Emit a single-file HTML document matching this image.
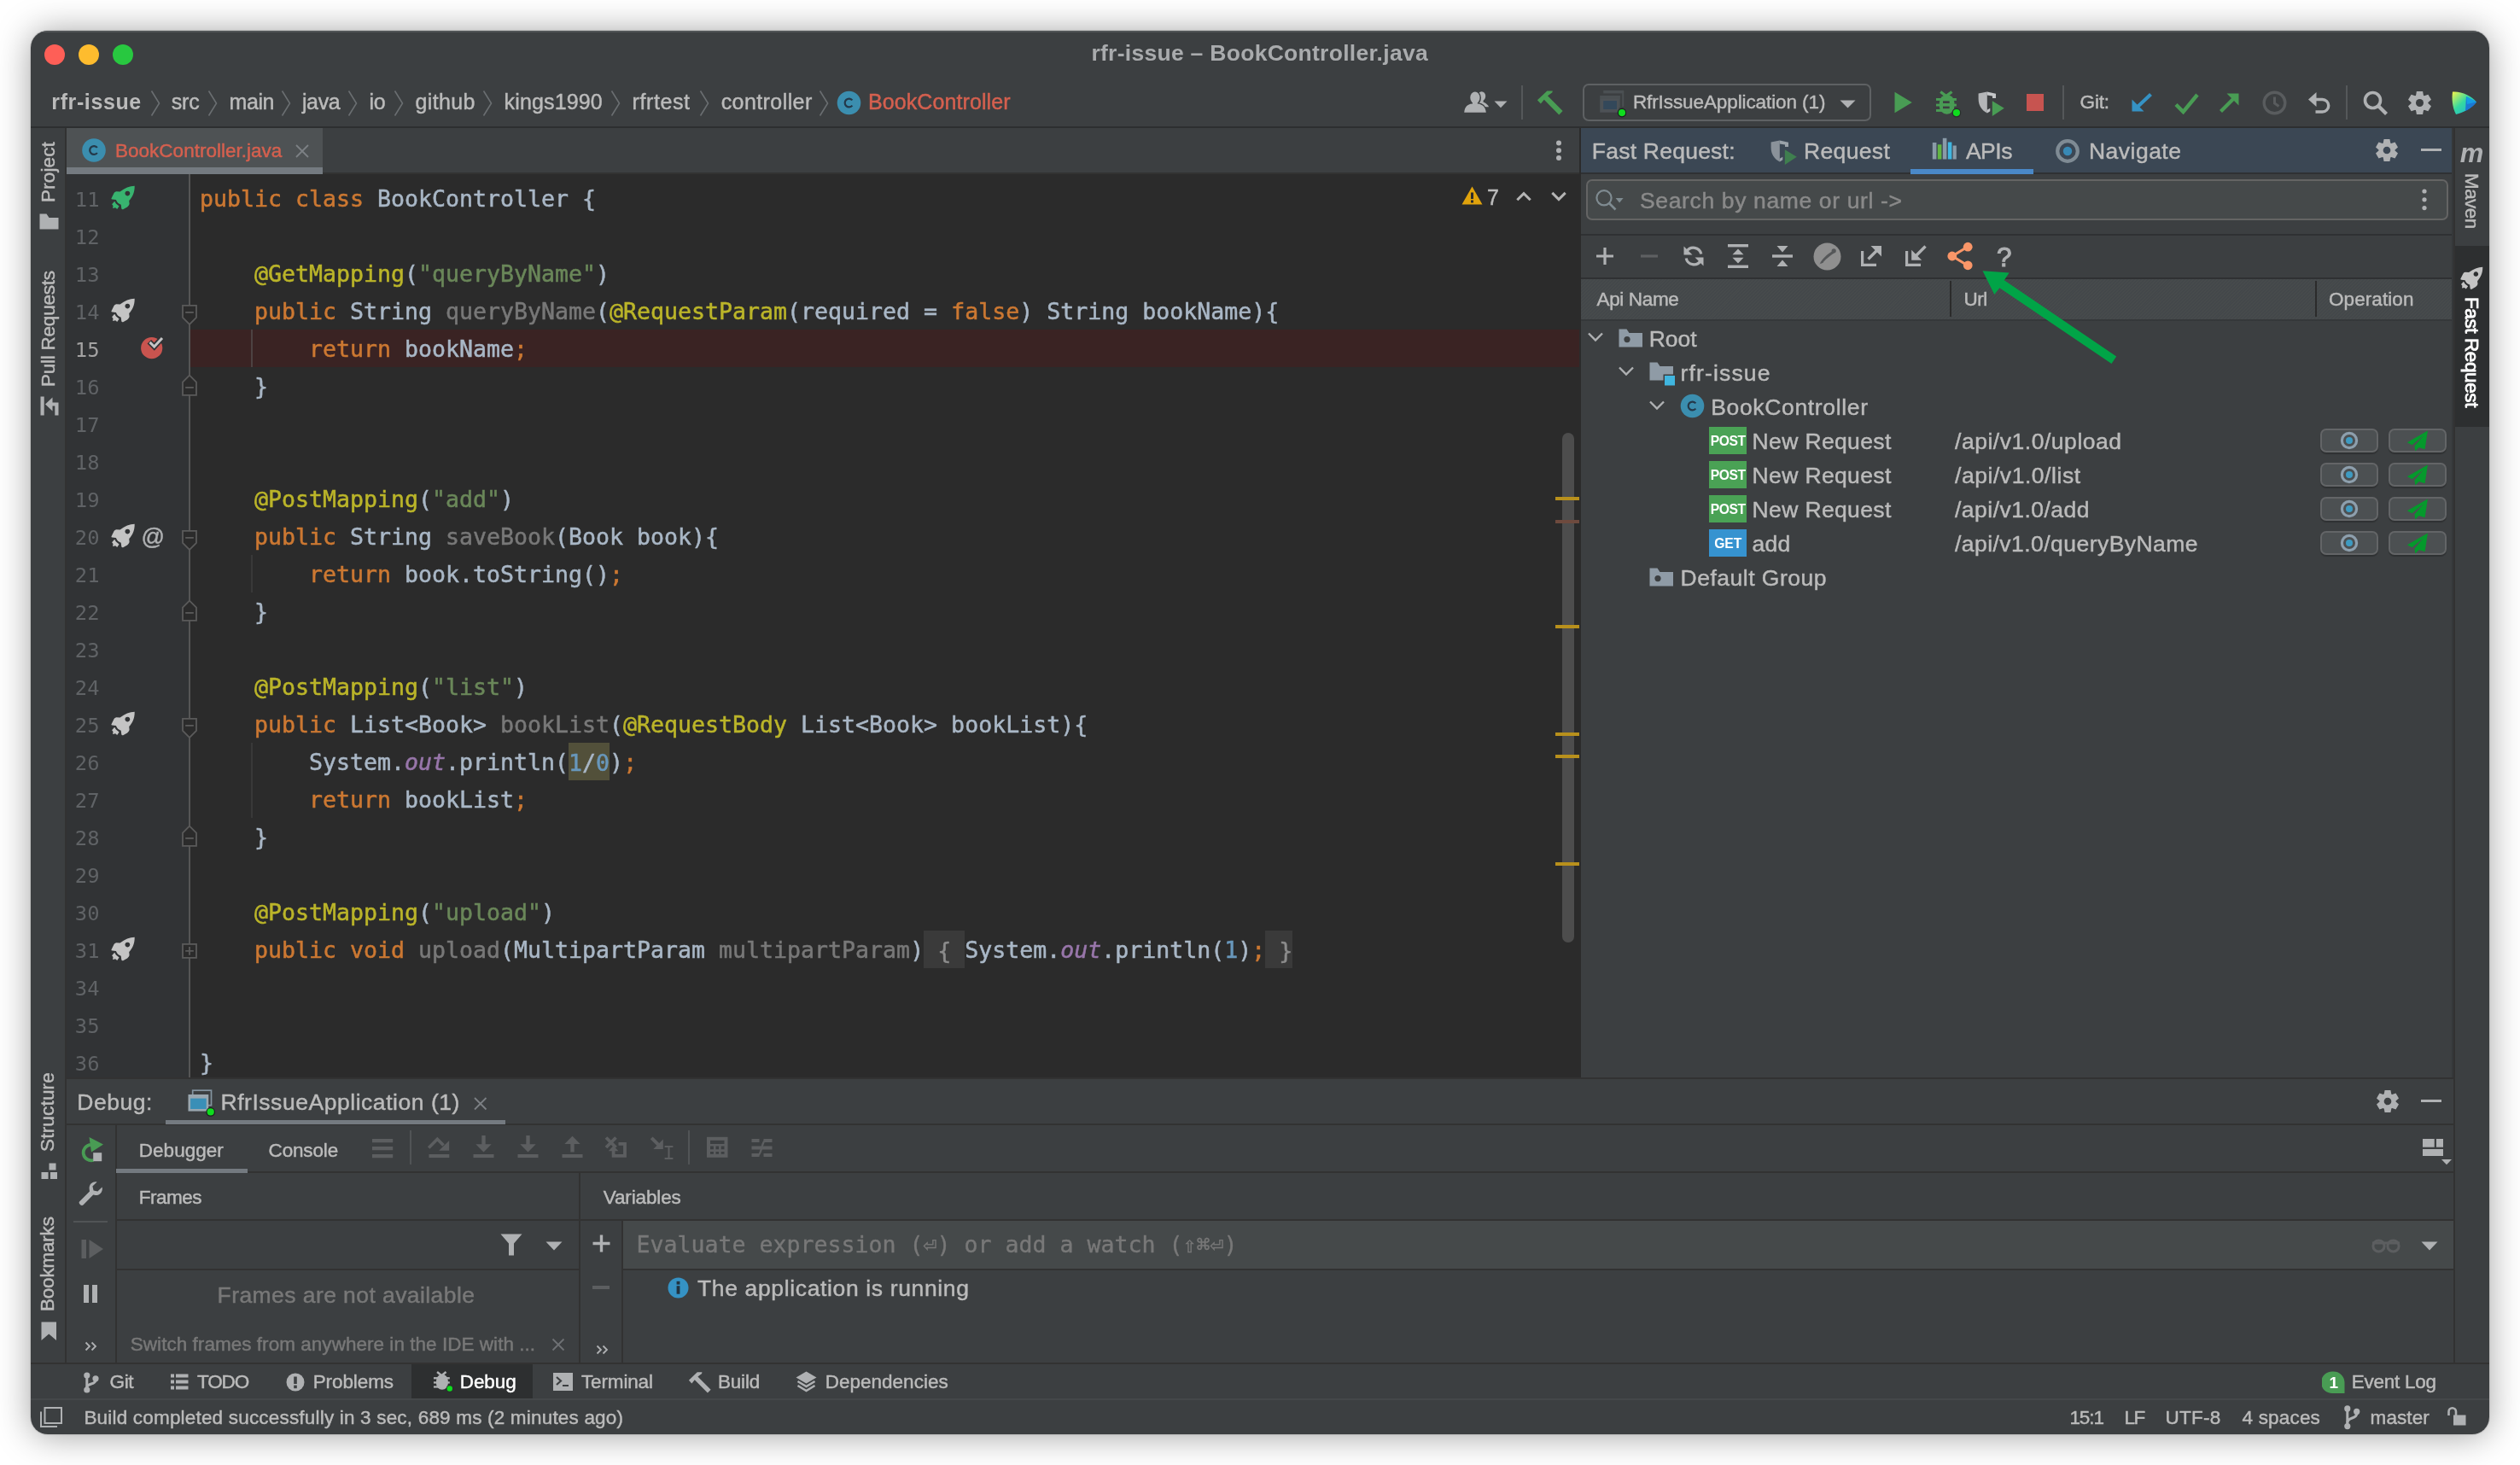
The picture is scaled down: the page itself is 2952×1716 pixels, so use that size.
<!DOCTYPE html>
<html><head><meta charset="utf-8"><title>rfr-issue – BookController.java</title>
<style>
html,body{margin:0;padding:0;background:#fff;}
body{width:2952px;height:1716px;position:relative;overflow:hidden;font-family:"Liberation Sans",sans-serif;}
#win{position:absolute;left:36px;top:36px;width:2880px;height:1644px;border-radius:20px;background:#3c3f41;overflow:hidden;}
#shadow{position:absolute;left:36px;top:36px;width:2880px;height:1644px;border-radius:20px;box-shadow:0 1.5px 40px rgba(0,0,0,0.37),0 0 1.5px rgba(0,0,0,0.45);}
#win div,#win span,#win svg{position:absolute;white-space:pre;}
#win span{display:block;}
</style></head><body>
<div id="shadow"></div>
<div id="win">
<div style="left:-36px;top:-36px;width:2952px;height:1716px;will-change:transform;">
<div style="left:36px;top:36px;width:2880px;height:1.6px;background:#515456;"></div>
<div style="left:36px;top:148px;width:2880px;height:2px;background:#2d2f30;"></div>
<div style="left:76px;top:150px;width:2px;height:1447px;background:#323232;"></div>
<div style="left:78px;top:150px;width:1772px;height:54px;background:#3c3f41;"></div>
<div style="left:78px;top:150px;width:300px;height:54px;background:#4e5254;"></div>
<div style="left:78px;top:196px;width:300px;height:8px;background:#747a80;"></div>
<div style="left:378px;top:202px;width:1472px;height:2px;background:#323232;"></div>
<div style="left:78px;top:204px;width:1772px;height:1058px;background:#2b2b2b;"></div>
<div style="left:78px;top:204px;width:144px;height:1058px;background:#313335;"></div>
<div style="left:221px;top:204px;width:2px;height:1058px;background:#555555;"></div>
<div style="left:223px;top:386px;width:1627px;height:44px;background:#3a2323;"></div>
<div style="left:1850px;top:150px;width:2px;height:1112px;background:#2b2b2b;"></div>
<div style="left:1852px;top:150px;width:1020px;height:52px;background:#3b4754;"></div>
<div style="left:1852px;top:202px;width:1020px;height:2px;background:#2f3133;"></div>
<div style="left:1852px;top:274px;width:1020px;height:2px;background:#2f3133;"></div>
<div style="left:1852px;top:325px;width:1020px;height:2px;background:#2f3133;"></div>
<div style="left:1852px;top:327px;width:1020px;height:47px;background:#45494a;background:repeating-linear-gradient(135deg,#474b4c 0 1.4px,#43474a 1.4px 2.8px);"></div>
<div style="left:1852px;top:374px;width:1020px;height:2px;background:#35383a;"></div>
<div style="left:1858px;top:210px;width:1010px;height:48px;box-sizing:border-box;background:#45494a;border:2px solid #646464;border-radius:7px;"></div>
<div style="left:2874px;top:150px;width:2px;height:1447px;background:#323232;"></div>
<div style="left:2872px;top:150px;width:2px;height:1112px;background:#35383a;"></div>
<div style="left:2876px;top:288px;width:40px;height:212px;background:#2d2f30;"></div>
<div style="left:78px;top:1262px;width:2796px;height:2px;background:#323232;"></div>
<div style="left:78px;top:1316px;width:2796px;height:2px;background:#323232;"></div>
<div style="left:136px;top:1372px;width:2738px;height:2px;background:#323232;"></div>
<div style="left:136px;top:1428px;width:2738px;height:2px;background:#323232;"></div>
<div style="left:135px;top:1318px;width:2px;height:278px;background:#323232;"></div>
<div style="left:678px;top:1374px;width:2px;height:222px;background:#323232;"></div>
<div style="left:728px;top:1430px;width:2px;height:166px;background:#323232;"></div>
<div style="left:136px;top:1486px;width:542px;height:2px;background:#323232;"></div>
<div style="left:730px;top:1430px;width:2144px;height:56px;background:#45494a;"></div>
<div style="left:730px;top:1486px;width:2144px;height:2px;background:#323232;"></div>
<div style="left:36px;top:1596px;width:2880px;height:2px;background:#323232;"></div>
<div style="left:482px;top:1598px;width:142px;height:40px;background:#2d2f30;"></div>
<div style="left:36px;top:1638px;width:2880px;height:2px;background:#444749;"></div>
<style>
.cl{font-family:"DejaVu Sans Mono","Liberation Mono",monospace;font-size:26.58px;line-height:44px;height:44px;color:#a9b7c6;-webkit-text-stroke:0.5px;}
.cl i{font-style:normal;}
.cl .k{color:#cc7832}.cl .a{color:#bbb529}.cl .s{color:#6a8759}.cl .n{color:#6897bb}.cl .u{color:#787878}
.cl .o{color:#9876aa;font-style:italic}.cl .f{color:#8c8c8c;background:#3a3a3a;padding:7.5px 0 5.5px 0}.cl .w{background:#52503a;padding:7.5px 0 5.5px 0}
.ln{font-family:"DejaVu Sans Mono","Liberation Mono",monospace;font-size:23.8px;line-height:44px;height:44px;color:#606366;width:60px;text-align:right;}
</style>
<span class="ln" style="left:56.5px;top:212px;color:#606366">11</span>
<span class="cl" style="left:234.0px;top:211px;"><i class=k>public class </i>BookController {</span>
<span class="ln" style="left:56.5px;top:256px;color:#606366">12</span>
<span class="ln" style="left:56.5px;top:300px;color:#606366">13</span>
<span class="cl" style="left:234.0px;top:299px;">    <i class=a>@GetMapping</i>(<i class=s>"queryByName"</i>)</span>
<span class="ln" style="left:56.5px;top:344px;color:#606366">14</span>
<span class="cl" style="left:234.0px;top:343px;">    <i class=k>public </i>String <i class=u>queryByName</i>(<i class=a>@RequestParam</i>(required = <i class=k>false</i>) String bookName){</span>
<span class="ln" style="left:56.5px;top:388px;color:#a4a3a3">15</span>
<span class="cl" style="left:234.0px;top:387px;">        <i class=k>return </i>bookName<i class=k>;</i></span>
<span class="ln" style="left:56.5px;top:432px;color:#606366">16</span>
<span class="cl" style="left:234.0px;top:431px;">    }</span>
<span class="ln" style="left:56.5px;top:476px;color:#606366">17</span>
<span class="ln" style="left:56.5px;top:520px;color:#606366">18</span>
<span class="ln" style="left:56.5px;top:564px;color:#606366">19</span>
<span class="cl" style="left:234.0px;top:563px;">    <i class=a>@PostMapping</i>(<i class=s>"add"</i>)</span>
<span class="ln" style="left:56.5px;top:608px;color:#606366">20</span>
<span class="cl" style="left:234.0px;top:607px;">    <i class=k>public </i>String <i class=u>saveBook</i>(Book book){</span>
<span class="ln" style="left:56.5px;top:652px;color:#606366">21</span>
<span class="cl" style="left:234.0px;top:651px;">        <i class=k>return </i>book.toString()<i class=k>;</i></span>
<span class="ln" style="left:56.5px;top:696px;color:#606366">22</span>
<span class="cl" style="left:234.0px;top:695px;">    }</span>
<span class="ln" style="left:56.5px;top:740px;color:#606366">23</span>
<span class="ln" style="left:56.5px;top:784px;color:#606366">24</span>
<span class="cl" style="left:234.0px;top:783px;">    <i class=a>@PostMapping</i>(<i class=s>"list"</i>)</span>
<span class="ln" style="left:56.5px;top:828px;color:#606366">25</span>
<span class="cl" style="left:234.0px;top:827px;">    <i class=k>public </i>List&lt;Book&gt; <i class=u>bookList</i>(<i class=a>@RequestBody </i>List&lt;Book&gt; bookList){</span>
<span class="ln" style="left:56.5px;top:872px;color:#606366">26</span>
<span class="cl" style="left:234.0px;top:871px;">        System.<i class=o>out</i>.println(<i class=w><i class=n>1</i>/<i class=n>0</i></i>)<i class=k>;</i></span>
<span class="ln" style="left:56.5px;top:916px;color:#606366">27</span>
<span class="cl" style="left:234.0px;top:915px;">        <i class=k>return </i>bookList<i class=k>;</i></span>
<span class="ln" style="left:56.5px;top:960px;color:#606366">28</span>
<span class="cl" style="left:234.0px;top:959px;">    }</span>
<span class="ln" style="left:56.5px;top:1004px;color:#606366">29</span>
<span class="ln" style="left:56.5px;top:1048px;color:#606366">30</span>
<span class="cl" style="left:234.0px;top:1047px;">    <i class=a>@PostMapping</i>(<i class=s>"upload"</i>)</span>
<span class="ln" style="left:56.5px;top:1092px;color:#606366">31</span>
<span class="cl" style="left:234.0px;top:1091px;">    <i class=k>public void </i><i class=u>upload</i>(MultipartParam <i class=u>multipartParam</i>)<i class=f> { </i>System.<i class=o>out</i>.println(<i class=n>1</i>)<i class=k>;</i><i class=f> }</i></span>
<span class="ln" style="left:56.5px;top:1136px;color:#606366">34</span>
<span class="ln" style="left:56.5px;top:1180px;color:#606366">35</span>
<span class="ln" style="left:56.5px;top:1224px;color:#606366">36</span>
<span class="cl" style="left:234.0px;top:1223px;">}</span>
<div style="left:294px;top:386px;width:2px;height:44px;background:#4d4242;"></div>
<div style="left:294px;top:650px;width:2px;height:44px;background:#393939;"></div>
<div style="left:294px;top:870px;width:2px;height:44px;background:#393939;"></div>
<div style="left:294px;top:914px;width:2px;height:44px;background:#393939;"></div>
<svg style="left:129.5px;top:217px;" width="29.0" height="29.0" viewBox="0 0 29 29"><path fill="#38b36f" fill-rule="evenodd" d="M27.7,0.7 C22,0.8 16,3.2 10.6,7.5 L6.2,7.2 Q4.3,7.6 3.6,9 L0.4,15.4 Q0.3,16.5 1.5,16.5 L5.9,17.1 C7,20 9,22 11.7,22.7 L12.3,27.3 Q12.6,28.6 14.2,28.2 C18,26.5 21,24.5 21.6,22 L21.2,18.1 C24.5,14.5 27.9,9 27.7,0.7 Z M19.35,6.66 a2.9,2.9 0 1 0 0.01,0 Z"/>
<path fill="#38b36f" d="M4.2,18.8 L5.9,21.5 L9.6,24.6 L7.2,28 L5.2,26.3 L2.1,27 L2.5,23.9 L1.1,22.2 Z"/></svg>
<svg style="left:129.5px;top:349px;" width="29.0" height="29.0" viewBox="0 0 29 29"><path fill="#c4c4c4" fill-rule="evenodd" d="M27.7,0.7 C22,0.8 16,3.2 10.6,7.5 L6.2,7.2 Q4.3,7.6 3.6,9 L0.4,15.4 Q0.3,16.5 1.5,16.5 L5.9,17.1 C7,20 9,22 11.7,22.7 L12.3,27.3 Q12.6,28.6 14.2,28.2 C18,26.5 21,24.5 21.6,22 L21.2,18.1 C24.5,14.5 27.9,9 27.7,0.7 Z M19.35,6.66 a2.9,2.9 0 1 0 0.01,0 Z"/>
<path fill="#c4c4c4" d="M4.2,18.8 L5.9,21.5 L9.6,24.6 L7.2,28 L5.2,26.3 L2.1,27 L2.5,23.9 L1.1,22.2 Z"/></svg>
<svg style="left:129.5px;top:613px;" width="29.0" height="29.0" viewBox="0 0 29 29"><path fill="#c4c4c4" fill-rule="evenodd" d="M27.7,0.7 C22,0.8 16,3.2 10.6,7.5 L6.2,7.2 Q4.3,7.6 3.6,9 L0.4,15.4 Q0.3,16.5 1.5,16.5 L5.9,17.1 C7,20 9,22 11.7,22.7 L12.3,27.3 Q12.6,28.6 14.2,28.2 C18,26.5 21,24.5 21.6,22 L21.2,18.1 C24.5,14.5 27.9,9 27.7,0.7 Z M19.35,6.66 a2.9,2.9 0 1 0 0.01,0 Z"/>
<path fill="#c4c4c4" d="M4.2,18.8 L5.9,21.5 L9.6,24.6 L7.2,28 L5.2,26.3 L2.1,27 L2.5,23.9 L1.1,22.2 Z"/></svg>
<svg style="left:129.5px;top:833px;" width="29.0" height="29.0" viewBox="0 0 29 29"><path fill="#c4c4c4" fill-rule="evenodd" d="M27.7,0.7 C22,0.8 16,3.2 10.6,7.5 L6.2,7.2 Q4.3,7.6 3.6,9 L0.4,15.4 Q0.3,16.5 1.5,16.5 L5.9,17.1 C7,20 9,22 11.7,22.7 L12.3,27.3 Q12.6,28.6 14.2,28.2 C18,26.5 21,24.5 21.6,22 L21.2,18.1 C24.5,14.5 27.9,9 27.7,0.7 Z M19.35,6.66 a2.9,2.9 0 1 0 0.01,0 Z"/>
<path fill="#c4c4c4" d="M4.2,18.8 L5.9,21.5 L9.6,24.6 L7.2,28 L5.2,26.3 L2.1,27 L2.5,23.9 L1.1,22.2 Z"/></svg>
<svg style="left:129.5px;top:1097px;" width="29.0" height="29.0" viewBox="0 0 29 29"><path fill="#c4c4c4" fill-rule="evenodd" d="M27.7,0.7 C22,0.8 16,3.2 10.6,7.5 L6.2,7.2 Q4.3,7.6 3.6,9 L0.4,15.4 Q0.3,16.5 1.5,16.5 L5.9,17.1 C7,20 9,22 11.7,22.7 L12.3,27.3 Q12.6,28.6 14.2,28.2 C18,26.5 21,24.5 21.6,22 L21.2,18.1 C24.5,14.5 27.9,9 27.7,0.7 Z M19.35,6.66 a2.9,2.9 0 1 0 0.01,0 Z"/>
<path fill="#c4c4c4" d="M4.2,18.8 L5.9,21.5 L9.6,24.6 L7.2,28 L5.2,26.3 L2.1,27 L2.5,23.9 L1.1,22.2 Z"/></svg>
<svg style="left:162px;top:385.5px;" width="34" height="40" viewBox="0 0 34 40"><circle cx="15.7" cy="21.7" r="12.6" fill="#c9544f"/>
<path d="M12.8,14.2 L18.7,20 L28.6,9.3" fill="none" stroke="#313335" stroke-width="6.5"/>
<path d="M13.5,14.9 L18.7,20 L28,10" fill="none" stroke="#c4c5c6" stroke-width="3"/></svg>
<span style="left:165.5px;top:612.1px;font-size:27px;line-height:35px;color:#afb1b3;font-family:'Liberation Sans',sans-serif;-webkit-text-stroke:0.45px;">@</span>
<svg style="left:211px;top:355px;" width="22" height="30" viewBox="0 0 22 30"><path d="M3,2.9 L19,2.9 L19,16.8 L11,25 L3,16.8 Z" fill="#2b2b2b" stroke="#5a5a5a" stroke-width="1.8"/><path d="M6.2,10.9 H15.8" stroke="#5a5a5a" stroke-width="1.8"/></svg>
<svg style="left:211px;top:619px;" width="22" height="30" viewBox="0 0 22 30"><path d="M3,2.9 L19,2.9 L19,16.8 L11,25 L3,16.8 Z" fill="#2b2b2b" stroke="#5a5a5a" stroke-width="1.8"/><path d="M6.2,10.9 H15.8" stroke="#5a5a5a" stroke-width="1.8"/></svg>
<svg style="left:211px;top:839px;" width="22" height="30" viewBox="0 0 22 30"><path d="M3,2.9 L19,2.9 L19,16.8 L11,25 L3,16.8 Z" fill="#2b2b2b" stroke="#5a5a5a" stroke-width="1.8"/><path d="M6.2,10.9 H15.8" stroke="#5a5a5a" stroke-width="1.8"/></svg>
<svg style="left:211px;top:437px;" width="22" height="30" viewBox="0 0 22 30"><path d="M11,2.6 L19,10.7 L19,25.8 L3,25.8 L3,10.7 Z" fill="#2b2b2b" stroke="#5a5a5a" stroke-width="1.8"/><path d="M6.2,16.9 H15.8" stroke="#5a5a5a" stroke-width="1.8"/></svg>
<svg style="left:211px;top:701px;" width="22" height="30" viewBox="0 0 22 30"><path d="M11,2.6 L19,10.7 L19,25.8 L3,25.8 L3,10.7 Z" fill="#2b2b2b" stroke="#5a5a5a" stroke-width="1.8"/><path d="M6.2,16.9 H15.8" stroke="#5a5a5a" stroke-width="1.8"/></svg>
<svg style="left:211px;top:965px;" width="22" height="30" viewBox="0 0 22 30"><path d="M11,2.6 L19,10.7 L19,25.8 L3,25.8 L3,10.7 Z" fill="#2b2b2b" stroke="#5a5a5a" stroke-width="1.8"/><path d="M6.2,16.9 H15.8" stroke="#5a5a5a" stroke-width="1.8"/></svg>
<svg style="left:211px;top:1103px;" width="22" height="22" viewBox="0 0 22 22"><rect x="3" y="2.9" width="16" height="16" fill="#2b2b2b" stroke="#5a5a5a" stroke-width="1.8"/><path d="M6.2,10.9 H15.8 M11,6.1 V15.7" stroke="#5a5a5a" stroke-width="1.8"/></svg>
<svg style="left:95px;top:161px;" width="30" height="30" viewBox="0 0 30 30"><circle cx="15" cy="15" r="13.8" fill="#3b8eaf"/><path d="M18.9,11.9 A4.9,4.9 0 1 0 18.9,18.1" fill="none" stroke="#24394a" stroke-width="2.2"/></svg>
<span style="left:135.0px;top:161.7px;font-size:22.5px;line-height:29px;color:#d5604f;font-family:'Liberation Sans',sans-serif;-webkit-text-stroke:0.45px;letter-spacing:0.015px;">BookController.java</span>
<svg style="left:345px;top:168px;" width="18" height="18" viewBox="0 0 18 18"><path d="M2,2 L16,16 M16,2 L2,16" stroke="#7c8084" stroke-width="1.8"/></svg>
<svg style="left:1820px;top:160px;" width="12" height="34" viewBox="0 0 12 34"><circle cx="6" cy="7.4" r="3" fill="#afb1b3"/><circle cx="6" cy="16.2" r="3" fill="#afb1b3"/><circle cx="6" cy="25" r="3" fill="#afb1b3"/></svg>
<svg style="left:1711px;top:217px;" width="27" height="24" viewBox="0 0 27 24"><path d="M13.5,1.5 L25.5,22.5 L1.5,22.5 Z" fill="#e0a30c"/><rect x="12" y="8.5" width="3" height="7.5" fill="#2b2b2b"/><rect x="12" y="17.5" width="3" height="3" fill="#2b2b2b"/></svg>
<span style="left:1742.0px;top:215.3px;font-size:25px;line-height:32px;color:#bbbbbb;font-family:'Liberation Sans',sans-serif;-webkit-text-stroke:0.45px;">7</span>
<svg style="left:1774px;top:222px;" width="22" height="16" viewBox="0 0 22 16"><path d="M3.3,12.3 L11,4.6 L18.7,12.3" fill="none" stroke="#b4b4b4" stroke-width="3"/></svg>
<svg style="left:1815px;top:222px;" width="22" height="16" viewBox="0 0 22 16"><path d="M3.3,3.9 L11,11.6 L18.7,3.9" fill="none" stroke="#b4b4b4" stroke-width="3"/></svg>
<div style="left:1830px;top:507px;width:14px;height:597px;background:rgba(255,255,255,0.16);border-radius:7px;"></div>
<div style="left:1822px;top:582px;width:28px;height:4px;background:#b8901c;"></div>
<div style="left:1822px;top:732px;width:28px;height:4px;background:#b8901c;"></div>
<div style="left:1822px;top:858px;width:28px;height:4px;background:#b8901c;"></div>
<div style="left:1822px;top:884px;width:28px;height:4px;background:#b8901c;"></div>
<div style="left:1822px;top:1010px;width:28px;height:4px;background:#b8901c;"></div>
<div style="left:1822px;top:609px;width:28px;height:4px;background:#6e4a3e;"></div>
<span style="left:1864.8px;top:159.8px;font-size:26.5px;line-height:34px;color:#bbbbbb;font-family:'Liberation Sans',sans-serif;-webkit-text-stroke:0.45px;letter-spacing:0.233px;">Fast Request:</span>
<svg style="left:2073.5px;top:164px;" width="32" height="30" viewBox="0 0 32 30"><path d="M0.6,2.6 L10.8,0.6 L10.8,25.4 C4,22 0.6,16 0.6,9 Z" fill="#8a929a"/>
<path d="M10.8,0.6 L21,2.8 L21,7.9 L17,7.9 L17,5.6 L10.8,4.6 Z M10.8,25.4 L10.8,21.8 L14.3,19.8 L14.3,23.2 Z" fill="#9aa2a9"/>
<path d="M16.8,11.2 L30.8,19.7 L16.8,29 Z" fill="#3f7f4f"/></svg>
<span style="left:2113.0px;top:159.8px;font-size:26.5px;line-height:34px;color:#bbbbbb;font-family:'Liberation Sans',sans-serif;-webkit-text-stroke:0.45px;letter-spacing:0.357px;">Request</span>
<svg style="left:2263px;top:161px;" width="30" height="26" viewBox="0 0 30 26"><rect x="0.8" y="6" width="4.6" height="19.5" fill="#8a9ba8"/><rect x="6.8" y="8.3" width="4.6" height="17.2" fill="#62b543"/>
<rect x="12.8" y="0.8" width="4.6" height="24.7" fill="#8a9ba8"/><rect x="18.8" y="5.5" width="4.6" height="20" fill="#40b6e0"/><rect x="24.6" y="9.5" width="4.2" height="16" fill="#8a9ba8"/></svg>
<span style="left:2302.9px;top:159.8px;font-size:26.5px;line-height:34px;color:#bbbbbb;font-family:'Liberation Sans',sans-serif;-webkit-text-stroke:0.45px;letter-spacing:-0.441px;">APIs</span>
<div style="left:2238px;top:198px;width:144px;height:6px;background:#4a88c7;"></div>
<svg style="left:2407px;top:161.5px;" width="30" height="30" viewBox="0 0 30 30"><circle cx="15" cy="15" r="11.8" fill="none" stroke="#7f8b94" stroke-width="4.2"/><circle cx="15" cy="15" r="5.2" fill="#3889b5"/></svg>
<span style="left:2447.0px;top:159.8px;font-size:26.5px;line-height:34px;color:#bbbbbb;font-family:'Liberation Sans',sans-serif;-webkit-text-stroke:0.45px;letter-spacing:0.476px;">Navigate</span>
<svg style="left:2783px;top:163px;" width="26" height="26" viewBox="0 0 24 24"><g transform="translate(12,12)" fill="#afb1b3"><path d="M-3.2,-12 L3.2,-12 L4.2,-6.5 L-4.2,-6.5 Z" transform="rotate(0)"/><path d="M-3.2,-12 L3.2,-12 L4.2,-6.5 L-4.2,-6.5 Z" transform="rotate(60)"/><path d="M-3.2,-12 L3.2,-12 L4.2,-6.5 L-4.2,-6.5 Z" transform="rotate(120)"/><path d="M-3.2,-12 L3.2,-12 L4.2,-6.5 L-4.2,-6.5 Z" transform="rotate(180)"/><path d="M-3.2,-12 L3.2,-12 L4.2,-6.5 L-4.2,-6.5 Z" transform="rotate(240)"/><path d="M-3.2,-12 L3.2,-12 L4.2,-6.5 L-4.2,-6.5 Z" transform="rotate(300)"/><circle r="8.7"/><circle r="4" fill="#3b4754"/></g></svg>
<div style="left:2836px;top:174px;width:24px;height:3.4px;background:#afb1b3;"></div>
<svg style="left:1868px;top:221px;" width="36" height="26" viewBox="0 0 36 26"><circle cx="11" cy="10.8" r="8.6" fill="none" stroke="#7f8b91" stroke-width="2.2"/><path d="M17,17 L24.5,24.5" stroke="#7f8b91" stroke-width="2.6"/><path d="M24.6,11 L33.6,11 L29.1,16.4 Z" fill="#7f8b91"/></svg>
<span style="left:1921.0px;top:217.8px;font-size:26.5px;line-height:34px;color:#8a8a8a;font-family:'Liberation Sans',sans-serif;-webkit-text-stroke:0.45px;letter-spacing:0.635px;">Search by name or url -&gt;</span>
<svg style="left:2834px;top:218px;" width="12" height="32" viewBox="0 0 12 32"><circle cx="6" cy="6" r="2.6" fill="#afb1b3"/><circle cx="6" cy="15.8" r="2.6" fill="#afb1b3"/><circle cx="6" cy="25.6" r="2.6" fill="#afb1b3"/></svg>
<svg style="left:1868px;top:288px;" width="24" height="24" viewBox="0 0 24 24"><path d="M12,2 V22 M2,12 H22" stroke="#afb1b3" stroke-width="3.2"/></svg>
<svg style="left:1920px;top:288px;" width="24" height="24" viewBox="0 0 24 24"><path d="M2,12 H22" stroke="#5e6062" stroke-width="3.2"/></svg>
<svg style="left:1970px;top:286px;" width="28" height="28" viewBox="0 0 28 28"><g transform="translate(28,0) scale(-1,1)"><path d="M5.2,11.5 A9.3,9.3 0 0 1 22.2,8.6" fill="none" stroke="#afb1b3" stroke-width="3.2"/><path d="M25.5,2.5 L25.5,12.5 L15.5,12.5 Z" fill="#afb1b3"/>
<path d="M22.8,16.5 A9.3,9.3 0 0 1 5.8,19.4" fill="none" stroke="#afb1b3" stroke-width="3.2"/><path d="M2.5,25.5 L2.5,15.5 L12.5,15.5 Z" fill="#afb1b3"/></g></svg>
<svg style="left:2023px;top:285px;" width="26" height="30" viewBox="0 0 26 30"><rect x="1" y="1" width="24" height="3.4" fill="#afb1b3"/><rect x="1" y="25.6" width="24" height="3.4" fill="#afb1b3"/><path d="M13,6.5 L19.5,13.3 L6.5,13.3 Z M13,23.5 L19.5,16.7 L6.5,16.7 Z" fill="#afb1b3"/></svg>
<svg style="left:2075px;top:285px;" width="26" height="30" viewBox="0 0 26 30"><rect x="1" y="13.3" width="24" height="3.4" fill="#afb1b3"/><path d="M13,10.5 L19.5,3 L6.5,3 Z M13,19.5 L19.5,27 L6.5,27 Z" fill="#afb1b3"/></svg>
<svg style="left:2123.5px;top:283.5px;" width="33" height="33" viewBox="0 0 33 33"><circle cx="16.5" cy="16.5" r="16" fill="#8f8f8f"/><path d="M8,24.5 C10,20 16,14 22,10.5 L24.5,12.5 C19,16 14,20.5 11.5,23.5 Z" fill="#555759"/><circle cx="24.2" cy="9.8" r="2.6" fill="#555759"/><path d="M7,25.5 L11,22.5 L11.8,23.8 Z" fill="#555759"/></svg>
<svg style="left:2179px;top:286px;" width="27" height="27" viewBox="0 0 27 27"><path d="M2.6,8 V24.4 H19" fill="none" stroke="#afb1b3" stroke-width="3.2"/><path d="M9.5,17.5 L20,7" stroke="#afb1b3" stroke-width="3.4"/><path d="M12.5,2 L25,2 L25,14.5 Z" fill="#afb1b3"/></svg>
<svg style="left:2231px;top:286px;" width="27" height="27" viewBox="0 0 27 27"><path d="M2.6,8 V24.4 H19" fill="none" stroke="#afb1b3" stroke-width="3.2"/><path d="M24.5,2.5 L13,14" stroke="#afb1b3" stroke-width="3.4"/><path d="M8.2,6.8 L8.2,18.8 L20.2,18.8 Z" fill="#afb1b3"/></svg>
<svg style="left:2281px;top:283px;" width="32" height="34" viewBox="0 0 32 34"><path d="M24,6 L6,17 L24,28" fill="none" stroke="#fa9668" stroke-width="3"/><circle cx="24.2" cy="6.2" r="5.4" fill="#fa9668"/><circle cx="5.8" cy="17" r="5.4" fill="#fa9668"/><circle cx="24.2" cy="27.8" r="5.4" fill="#fa9668"/></svg>
<span style="left:2339.0px;top:280.6px;font-size:31.5px;line-height:41px;color:#afb1b3;font-family:'Liberation Sans',sans-serif;-webkit-text-stroke:0.45px;-webkit-text-stroke:1.1px;">?</span>
<span style="left:1870.5px;top:335.8px;font-size:22.5px;line-height:29px;color:#bbbbbb;font-family:'Liberation Sans',sans-serif;-webkit-text-stroke:0.45px;letter-spacing:-0.349px;">Api Name</span>
<div style="left:2284px;top:329px;width:2px;height:42px;background:#2b2b2b;"></div>
<span style="left:2300.5px;top:335.8px;font-size:22.5px;line-height:29px;color:#bbbbbb;font-family:'Liberation Sans',sans-serif;-webkit-text-stroke:0.45px;letter-spacing:-0.447px;">Url</span>
<div style="left:2712px;top:329px;width:2px;height:42px;background:#2b2b2b;"></div>
<span style="left:2728.0px;top:335.8px;font-size:22.5px;line-height:29px;color:#bbbbbb;font-family:'Liberation Sans',sans-serif;-webkit-text-stroke:0.45px;letter-spacing:0.076px;">Operation</span>
<svg style="left:1859px;top:388px;" width="20" height="14" viewBox="0 0 20 14"><path d="M2,2.5 L10,10.5 L18,2.5" fill="none" stroke="#afb1b3" stroke-width="2.4"/></svg>
<svg style="left:1895.5px;top:384.5px;" width="29" height="22" viewBox="0 0 29 22"><path d="M0.5,0.5 L9.5,0.5 L12.5,5 L28,5 L28,21.5 L0.5,21.5 Z" fill="#8f9ba6"/><circle cx="10" cy="12.6" r="3.6" fill="#3c3f41"/></svg>
<span style="left:1931.7px;top:380.1px;font-size:26.5px;line-height:34px;color:#bbbbbb;font-family:'Liberation Sans',sans-serif;-webkit-text-stroke:0.45px;letter-spacing:0.006px;">Root</span>
<svg style="left:1894.5px;top:428px;" width="20" height="14" viewBox="0 0 20 14"><path d="M2,2.5 L10,10.5 L18,2.5" fill="none" stroke="#afb1b3" stroke-width="2.4"/></svg>
<svg style="left:1931.5px;top:424px;" width="32" height="29" viewBox="0 0 32 29"><path d="M0.5,0.5 L9.5,0.5 L12.5,5 L28,5 L28,21.5 L0.5,21.5 Z" fill="#8f9ba6"/><rect x="16.5" y="14.5" width="14" height="13" fill="#3c3f41"/><rect x="18" y="16" width="12" height="11.5" fill="#40b6e0"/></svg>
<span style="left:1968.6px;top:420.1px;font-size:26.5px;line-height:34px;color:#bbbbbb;font-family:'Liberation Sans',sans-serif;-webkit-text-stroke:0.45px;letter-spacing:1.144px;">rfr-issue</span>
<svg style="left:1931px;top:467.8px;" width="20" height="14" viewBox="0 0 20 14"><path d="M2,2.5 L10,10.5 L18,2.5" fill="none" stroke="#afb1b3" stroke-width="2.4"/></svg>
<svg style="left:1967.5px;top:461.3px;" width="29" height="29" viewBox="0 0 29 29"><circle cx="14.5" cy="14.5" r="13.8" fill="#3b8eaf"/><path d="M18.4,11.4 A4.9,4.9 0 1 0 18.4,17.6" fill="none" stroke="#24394a" stroke-width="2.2"/></svg>
<span style="left:2004.2px;top:460.0px;font-size:26.5px;line-height:34px;color:#bbbbbb;font-family:'Liberation Sans',sans-serif;-webkit-text-stroke:0.45px;letter-spacing:0.659px;">BookController</span>
<div style="left:2002px;top:500px;width:44px;height:32px;background:#4aa255;"></div>
<span style="left:2003.7px;top:506.5px;font-size:15.7px;line-height:20px;color:#ffffff;font-family:'Liberation Sans',sans-serif;font-weight:700;letter-spacing:-0.436px;">POST</span>
<span style="left:2052.6px;top:499.8px;font-size:26.5px;line-height:34px;color:#bbbbbb;font-family:'Liberation Sans',sans-serif;-webkit-text-stroke:0.45px;letter-spacing:0.357px;">New Request</span>
<span style="left:2290.0px;top:499.8px;font-size:26.5px;line-height:34px;color:#bbbbbb;font-family:'Liberation Sans',sans-serif;-webkit-text-stroke:0.45px;letter-spacing:0.530px;">/api/v1.0/upload</span>
<div style="left:2718px;top:502px;width:67.5px;height:27.5px;box-sizing:border-box;background:#4c5052;border:2px solid #636567;border-radius:7px;box-shadow:0 2px 1px rgba(0,0,0,0.22);"></div>
<svg style="left:2741px;top:504.75px;" width="22" height="22" viewBox="0 0 22 22"><circle cx="11" cy="11" r="8.6" fill="none" stroke="#8d9fad" stroke-width="3.2"/><circle cx="11" cy="11" r="4" fill="#3e9bc2"/></svg>
<div style="left:2798px;top:502px;width:67.5px;height:27.5px;box-sizing:border-box;background:#4c5052;border:2px solid #636567;border-radius:7px;box-shadow:0 2px 1px rgba(0,0,0,0.22);"></div>
<svg style="left:2819px;top:503.5px;" width="26" height="25" viewBox="0 0 26 25"><path d="M24.9,0.5 L0.8,14.3 L6.5,17.2 L19.9,6.2 L9.4,18.4 L10.3,24.5 L14.6,20.1 L21.6,22.3 Z" fill="#05992c"/></svg>
<div style="left:2002px;top:540px;width:44px;height:32px;background:#4aa255;"></div>
<span style="left:2003.7px;top:546.5px;font-size:15.7px;line-height:20px;color:#ffffff;font-family:'Liberation Sans',sans-serif;font-weight:700;letter-spacing:-0.436px;">POST</span>
<span style="left:2052.6px;top:539.8px;font-size:26.5px;line-height:34px;color:#bbbbbb;font-family:'Liberation Sans',sans-serif;-webkit-text-stroke:0.45px;letter-spacing:0.357px;">New Request</span>
<span style="left:2290.0px;top:539.8px;font-size:26.5px;line-height:34px;color:#bbbbbb;font-family:'Liberation Sans',sans-serif;-webkit-text-stroke:0.45px;letter-spacing:0.548px;">/api/v1.0/list</span>
<div style="left:2718px;top:542px;width:67.5px;height:27.5px;box-sizing:border-box;background:#4c5052;border:2px solid #636567;border-radius:7px;box-shadow:0 2px 1px rgba(0,0,0,0.22);"></div>
<svg style="left:2741px;top:544.75px;" width="22" height="22" viewBox="0 0 22 22"><circle cx="11" cy="11" r="8.6" fill="none" stroke="#8d9fad" stroke-width="3.2"/><circle cx="11" cy="11" r="4" fill="#3e9bc2"/></svg>
<div style="left:2798px;top:542px;width:67.5px;height:27.5px;box-sizing:border-box;background:#4c5052;border:2px solid #636567;border-radius:7px;box-shadow:0 2px 1px rgba(0,0,0,0.22);"></div>
<svg style="left:2819px;top:543.5px;" width="26" height="25" viewBox="0 0 26 25"><path d="M24.9,0.5 L0.8,14.3 L6.5,17.2 L19.9,6.2 L9.4,18.4 L10.3,24.5 L14.6,20.1 L21.6,22.3 Z" fill="#05992c"/></svg>
<div style="left:2002px;top:580px;width:44px;height:32px;background:#4aa255;"></div>
<span style="left:2003.7px;top:586.5px;font-size:15.7px;line-height:20px;color:#ffffff;font-family:'Liberation Sans',sans-serif;font-weight:700;letter-spacing:-0.436px;">POST</span>
<span style="left:2052.6px;top:579.8px;font-size:26.5px;line-height:34px;color:#bbbbbb;font-family:'Liberation Sans',sans-serif;-webkit-text-stroke:0.45px;letter-spacing:0.357px;">New Request</span>
<span style="left:2290.0px;top:579.8px;font-size:26.5px;line-height:34px;color:#bbbbbb;font-family:'Liberation Sans',sans-serif;-webkit-text-stroke:0.45px;letter-spacing:0.480px;">/api/v1.0/add</span>
<div style="left:2718px;top:582px;width:67.5px;height:27.5px;box-sizing:border-box;background:#4c5052;border:2px solid #636567;border-radius:7px;box-shadow:0 2px 1px rgba(0,0,0,0.22);"></div>
<svg style="left:2741px;top:584.75px;" width="22" height="22" viewBox="0 0 22 22"><circle cx="11" cy="11" r="8.6" fill="none" stroke="#8d9fad" stroke-width="3.2"/><circle cx="11" cy="11" r="4" fill="#3e9bc2"/></svg>
<div style="left:2798px;top:582px;width:67.5px;height:27.5px;box-sizing:border-box;background:#4c5052;border:2px solid #636567;border-radius:7px;box-shadow:0 2px 1px rgba(0,0,0,0.22);"></div>
<svg style="left:2819px;top:583.5px;" width="26" height="25" viewBox="0 0 26 25"><path d="M24.9,0.5 L0.8,14.3 L6.5,17.2 L19.9,6.2 L9.4,18.4 L10.3,24.5 L14.6,20.1 L21.6,22.3 Z" fill="#05992c"/></svg>
<div style="left:2002px;top:620px;width:44px;height:32px;background:#3693d0;"></div>
<span style="left:2008.2px;top:626.5px;font-size:15.7px;line-height:20px;color:#ffffff;font-family:'Liberation Sans',sans-serif;font-weight:700;letter-spacing:-0.091px;">GET</span>
<span style="left:2052.6px;top:619.8px;font-size:26.5px;line-height:34px;color:#bbbbbb;font-family:'Liberation Sans',sans-serif;-webkit-text-stroke:0.45px;letter-spacing:0.262px;">add</span>
<span style="left:2290.0px;top:619.8px;font-size:26.5px;line-height:34px;color:#bbbbbb;font-family:'Liberation Sans',sans-serif;-webkit-text-stroke:0.45px;letter-spacing:0.455px;">/api/v1.0/queryByName</span>
<div style="left:2718px;top:622px;width:67.5px;height:27.5px;box-sizing:border-box;background:#4c5052;border:2px solid #636567;border-radius:7px;box-shadow:0 2px 1px rgba(0,0,0,0.22);"></div>
<svg style="left:2741px;top:624.75px;" width="22" height="22" viewBox="0 0 22 22"><circle cx="11" cy="11" r="8.6" fill="none" stroke="#8d9fad" stroke-width="3.2"/><circle cx="11" cy="11" r="4" fill="#3e9bc2"/></svg>
<div style="left:2798px;top:622px;width:67.5px;height:27.5px;box-sizing:border-box;background:#4c5052;border:2px solid #636567;border-radius:7px;box-shadow:0 2px 1px rgba(0,0,0,0.22);"></div>
<svg style="left:2819px;top:623.5px;" width="26" height="25" viewBox="0 0 26 25"><path d="M24.9,0.5 L0.8,14.3 L6.5,17.2 L19.9,6.2 L9.4,18.4 L10.3,24.5 L14.6,20.1 L21.6,22.3 Z" fill="#05992c"/></svg>
<svg style="left:1931.5px;top:664.5px;" width="29" height="22" viewBox="0 0 29 22"><path d="M0.5,0.5 L9.5,0.5 L12.5,5 L28,5 L28,21.5 L0.5,21.5 Z" fill="#8f9ba6"/><circle cx="10" cy="12.6" r="3.6" fill="#3c3f41"/></svg>
<span style="left:1968.6px;top:659.8px;font-size:26.5px;line-height:34px;color:#bbbbbb;font-family:'Liberation Sans',sans-serif;-webkit-text-stroke:0.45px;letter-spacing:0.494px;">Default Group</span>
<svg style="left:2300px;top:300px;" width="200" height="140" viewBox="0 0 200 140"><polygon fill="#01a447" points="22.5,17.2 53.6,19.6 47.8,28.2 179.2,117.5 173.5,126.0 42.4,37.3 36.3,44.9"/></svg>
<span style="left:2881.8px;top:159.6px;font-size:31px;line-height:40px;color:#afb1b3;font-family:'Liberation Sans',sans-serif;font-weight:700;font-style:italic;">m</span>
<span style="left:2895.4px;top:203px;font-size:22.5px;line-height:29px;height:29px;color:#bbbbbb;letter-spacing:-0.587px;-webkit-text-stroke:0.45px;transform-origin:0 0;transform:rotate(90deg) translate(0,-15.0px);">Maven</span>
<svg style="left:2881.8px;top:311.5px;" width="27.5" height="27.5" viewBox="0 0 29 29"><path fill="#c4c4c4" fill-rule="evenodd" d="M27.7,0.7 C22,0.8 16,3.2 10.6,7.5 L6.2,7.2 Q4.3,7.6 3.6,9 L0.4,15.4 Q0.3,16.5 1.5,16.5 L5.9,17.1 C7,20 9,22 11.7,22.7 L12.3,27.3 Q12.6,28.6 14.2,28.2 C18,26.5 21,24.5 21.6,22 L21.2,18.1 C24.5,14.5 27.9,9 27.7,0.7 Z M19.35,6.66 a2.9,2.9 0 1 0 0.01,0 Z"/>
<path fill="#c4c4c4" d="M4.2,18.8 L5.9,21.5 L9.6,24.6 L7.2,28 L5.2,26.3 L2.1,27 L2.5,23.9 L1.1,22.2 Z"/></svg>
<span style="left:2895px;top:348px;font-size:22.5px;line-height:29px;height:29px;color:#ffffff;letter-spacing:-0.401px;-webkit-text-stroke:0.8px;transform-origin:0 0;transform:rotate(90deg) translate(0,-15.0px);">Fast Request</span>
<div style="left:52px;top:52px;width:24px;height:24px;background:#fe5f57;border-radius:12px;"></div>
<div style="left:92px;top:52px;width:24px;height:24px;background:#febc2e;border-radius:12px;"></div>
<div style="left:132px;top:52px;width:24px;height:24px;background:#28c840;border-radius:12px;"></div>
<span style="left:1278.4px;top:45.1px;font-size:26.5px;line-height:34px;color:#a9abad;font-family:'Liberation Sans',sans-serif;font-weight:700;letter-spacing:0.282px;">rfr-issue – BookController.java</span>
<span style="left:60.3px;top:103.3px;font-size:25px;line-height:32px;color:#bbbbbb;font-family:'Liberation Sans',sans-serif;font-weight:700;letter-spacing:0.607px;">rfr-issue</span>
<span style="left:200.8px;top:103.3px;font-size:25px;line-height:32px;color:#bbbbbb;font-family:'Liberation Sans',sans-serif;-webkit-text-stroke:0.45px;letter-spacing:-0.175px;">src</span>
<span style="left:268.6px;top:103.3px;font-size:25px;line-height:32px;color:#bbbbbb;font-family:'Liberation Sans',sans-serif;-webkit-text-stroke:0.45px;letter-spacing:-0.447px;">main</span>
<span style="left:353.9px;top:103.3px;font-size:25px;line-height:32px;color:#bbbbbb;font-family:'Liberation Sans',sans-serif;-webkit-text-stroke:0.45px;letter-spacing:-0.341px;">java</span>
<span style="left:432.4px;top:103.3px;font-size:25px;line-height:32px;color:#bbbbbb;font-family:'Liberation Sans',sans-serif;-webkit-text-stroke:0.45px;letter-spacing:-0.229px;">io</span>
<span style="left:486.5px;top:103.3px;font-size:25px;line-height:32px;color:#bbbbbb;font-family:'Liberation Sans',sans-serif;-webkit-text-stroke:0.45px;letter-spacing:0.347px;">github</span>
<span style="left:590.6px;top:103.3px;font-size:25px;line-height:32px;color:#bbbbbb;font-family:'Liberation Sans',sans-serif;-webkit-text-stroke:0.45px;letter-spacing:0.136px;">kings1990</span>
<span style="left:740.6px;top:103.3px;font-size:25px;line-height:32px;color:#bbbbbb;font-family:'Liberation Sans',sans-serif;-webkit-text-stroke:0.45px;letter-spacing:0.587px;">rfrtest</span>
<span style="left:844.7px;top:103.3px;font-size:25px;line-height:32px;color:#bbbbbb;font-family:'Liberation Sans',sans-serif;-webkit-text-stroke:0.45px;letter-spacing:0.418px;">controller</span>
<svg style="left:175.5px;top:105px;" width="13" height="32" viewBox="0 0 13 32"><path d="M1.5,1.5 L10.5,16 L1.5,30.5" fill="none" stroke="#6a6e71" stroke-width="1.6"/></svg>
<svg style="left:243.3px;top:105px;" width="13" height="32" viewBox="0 0 13 32"><path d="M1.5,1.5 L10.5,16 L1.5,30.5" fill="none" stroke="#6a6e71" stroke-width="1.6"/></svg>
<svg style="left:329px;top:105px;" width="13" height="32" viewBox="0 0 13 32"><path d="M1.5,1.5 L10.5,16 L1.5,30.5" fill="none" stroke="#6a6e71" stroke-width="1.6"/></svg>
<svg style="left:407px;top:105px;" width="13" height="32" viewBox="0 0 13 32"><path d="M1.5,1.5 L10.5,16 L1.5,30.5" fill="none" stroke="#6a6e71" stroke-width="1.6"/></svg>
<svg style="left:461px;top:105px;" width="13" height="32" viewBox="0 0 13 32"><path d="M1.5,1.5 L10.5,16 L1.5,30.5" fill="none" stroke="#6a6e71" stroke-width="1.6"/></svg>
<svg style="left:565px;top:105px;" width="13" height="32" viewBox="0 0 13 32"><path d="M1.5,1.5 L10.5,16 L1.5,30.5" fill="none" stroke="#6a6e71" stroke-width="1.6"/></svg>
<svg style="left:715px;top:105px;" width="13" height="32" viewBox="0 0 13 32"><path d="M1.5,1.5 L10.5,16 L1.5,30.5" fill="none" stroke="#6a6e71" stroke-width="1.6"/></svg>
<svg style="left:819.3px;top:105px;" width="13" height="32" viewBox="0 0 13 32"><path d="M1.5,1.5 L10.5,16 L1.5,30.5" fill="none" stroke="#6a6e71" stroke-width="1.6"/></svg>
<svg style="left:959px;top:105px;" width="13" height="32" viewBox="0 0 13 32"><path d="M1.5,1.5 L10.5,16 L1.5,30.5" fill="none" stroke="#6a6e71" stroke-width="1.6"/></svg>
<svg style="left:979.5px;top:105.5px;" width="29" height="29" viewBox="0 0 29 29"><circle cx="14.5" cy="14.5" r="13.8" fill="#3b8eaf"/><path d="M18.4,11.4 A4.9,4.9 0 1 0 18.4,17.6" fill="none" stroke="#24394a" stroke-width="2.2"/></svg>
<span style="left:1017.0px;top:103.3px;font-size:25px;line-height:32px;color:#d5604f;font-family:'Liberation Sans',sans-serif;-webkit-text-stroke:0.45px;letter-spacing:0.089px;">BookController</span>
<svg style="left:1715px;top:107px;" width="30" height="25" viewBox="0 0 30 25"><g fill="#afb1b3"><ellipse cx="20.6" cy="5.6" rx="4.6" ry="5.4"/><rect x="18.6" y="9" width="4" height="5"/><path d="M15,13 C20,11 27,13 29,18.2 L22,18.2 Z"/></g>
<g fill="#3c3f41" stroke="#3c3f41" stroke-width="3"><path d="M0.2,24.8 C0.8,18 4,15.2 9.5,14.6 L16,14.6 C21.5,15.2 25,18 25.8,24.8 Z"/><ellipse cx="12.9" cy="7.4" rx="5.6" ry="6.8"/></g>
<g fill="#afb1b3"><path d="M0.2,24.8 C0.8,18 4,15.2 9.5,14.6 L16,14.6 C21.5,15.2 25,18 25.8,24.8 Z"/><ellipse cx="12.9" cy="7.4" rx="5.6" ry="6.8"/><rect x="10" y="12" width="5.8" height="4"/></g></svg>
<svg style="left:1750px;top:118px;" width="16" height="9" viewBox="0 0 16 9"><path d="M0.5,0.5 L15.5,0.5 L8,8.3 Z" fill="#afb1b3"/></svg>
<div style="left:1782px;top:100px;width:2px;height:40px;background:#55585a;"></div>
<svg style="left:1799.5px;top:105.5px;" width="32" height="30" viewBox="0 0 32 30"><path fill="#499c54" d="M0.9,11.3 L12.3,0.4 L18.8,0.4 L18.4,2.2 L13,6.3 L30.6,24 L26.3,28.4 L8.8,10.7 L4.9,15.5 Z"/></svg>
<div style="left:1854px;top:98px;width:338px;height:43.5px;box-sizing:border-box;border:2px solid #5e6163;border-radius:7px;"></div>
<svg style="left:1873px;top:105px;" width="32" height="33" viewBox="0 0 32 33"><g fill="#4b5053"><rect x="5.2" y="0.9" width="24" height="3.5"/><rect x="27.2" y="0.9" width="2" height="19"/><rect x="1.2" y="7" width="23.6" height="4"/><rect x="22.8" y="7" width="2" height="14"/></g>
<rect x="1.2" y="11" width="22.3" height="15.7" fill="#4d5256"/><rect x="5.2" y="13.1" width="15.8" height="9.9" fill="#33485a"/>
<circle cx="27" cy="27.1" r="5.3" fill="#1a1d1e"/><circle cx="27" cy="27.1" r="4.1" fill="#0fdc1e"/></svg>
<span style="left:1912.9px;top:105.2px;font-size:22.5px;line-height:29px;color:#bbbbbb;font-family:'Liberation Sans',sans-serif;-webkit-text-stroke:0.45px;letter-spacing:-0.095px;">RfrIssueApplication (1)</span>
<svg style="left:2155px;top:116.5px;" width="19" height="10" viewBox="0 0 19 10"><path d="M0.5,0.5 L18.5,0.5 L9.5,9.5 Z" fill="#afb1b3"/></svg>
<svg style="left:2219px;top:107px;" width="22" height="26" viewBox="0 0 22 26"><path d="M0.5,0.8 L20.8,13 L0.5,25.2 Z" fill="#499c54"/></svg>
<svg style="left:2266px;top:106px;" width="32" height="33" viewBox="0 0 32 33"><path d="M7.2,1.4 L13.8,6.6 L20.5,1.4" fill="none" stroke="#499c54" stroke-width="3.2"/>
<g fill="#499c54"><rect x="5.9" y="4.9" width="17.5" height="22.8" rx="8.7" ry="9"/>
<rect x="2" y="9" width="23.9" height="2.9"/><rect x="2" y="15.6" width="23.9" height="2.9"/><rect x="2" y="22" width="23.9" height="2.9"/></g>
<rect x="10" y="12.3" width="7.7" height="2.7" fill="#3c3f41"/><rect x="10" y="18.6" width="7.7" height="2.6" fill="#3c3f41"/><circle cx="25.9" cy="26.1" r="5.4" fill="#2a2d2e"/><circle cx="25.9" cy="26.1" r="4.1" fill="#0fdc1e"/></svg>
<svg style="left:2317px;top:107px;" width="32" height="30" viewBox="0 0 32 30"><path d="M0.6,2.6 L10.8,0.6 L10.8,25.4 C4,22 0.6,16 0.6,9 Z" fill="#b4b6b8"/>
<path d="M10.8,0.6 L21,2.8 L21,7.9 L17,7.9 L17,5.6 L10.8,4.6 Z M10.8,25.4 L10.8,21.8 L14.3,19.8 L14.3,23.2 Z" fill="#c4c6c8"/>
<path d="M16.8,11.2 L30.8,19.7 L16.8,29 Z" fill="#499c54"/></svg>
<div style="left:2374px;top:110px;width:20px;height:20px;background:#c75450;"></div>
<div style="left:2416px;top:100px;width:2px;height:40px;background:#55585a;"></div>
<span style="left:2436.6px;top:105.2px;font-size:22.5px;line-height:29px;color:#bbbbbb;font-family:'Liberation Sans',sans-serif;-webkit-text-stroke:0.45px;letter-spacing:-0.176px;">Git:</span>
<svg style="left:2496px;top:107.5px;" width="26" height="24" viewBox="0 0 26 24"><path d="M23.5,2.5 L7,18" stroke="#3592c4" stroke-width="4.2" fill="none"/><path d="M1.5,22.5 L1.5,8.5 L15.5,22.5 Z" fill="#3592c4"/></svg>
<svg style="left:2547px;top:107.5px;" width="29" height="26" viewBox="0 0 29 26"><path d="M2,14.5 L10.5,23 L27,3" stroke="#499c54" stroke-width="4.4" fill="none"/></svg>
<svg style="left:2599px;top:108px;" width="25" height="25" viewBox="0 0 25 25"><path d="M2.5,22.5 L18,7" stroke="#499c54" stroke-width="4.2" fill="none"/><path d="M23.5,1.5 L23.5,15.5 L9.5,1.5 Z" fill="#499c54"/></svg>
<svg style="left:2649.5px;top:106px;" width="29" height="29" viewBox="0 0 29 29"><circle cx="14.5" cy="14.5" r="12.3" fill="none" stroke="#595c5e" stroke-width="3.4"/><path d="M14.5,7.5 V15 L19.5,18.5" fill="none" stroke="#595c5e" stroke-width="3"/></svg>
<svg style="left:2703px;top:106.5px;" width="28" height="27" viewBox="0 0 28 27"><path d="M7,9.5 H17.5 A7.2,7.2 0 0 1 17.5,24 H9.5" fill="none" stroke="#afb1b3" stroke-width="3.4"/><path d="M1,9.5 L10.5,1 L10.5,18 Z" fill="#afb1b3"/></svg>
<div style="left:2748px;top:100px;width:2px;height:40px;background:#55585a;"></div>
<svg style="left:2767.5px;top:106px;" width="30" height="30" viewBox="0 0 30 30"><circle cx="11.5" cy="11.5" r="9" fill="none" stroke="#afb1b3" stroke-width="3.6"/><path d="M18,18 L27.5,27.5" stroke="#afb1b3" stroke-width="4.2"/></svg>
<svg style="left:2820.5px;top:106.5px;" width="27" height="27" viewBox="0 0 24 24"><g transform="translate(12,12)" fill="#afb1b3"><path d="M-3.2,-12 L3.2,-12 L4.2,-6.5 L-4.2,-6.5 Z" transform="rotate(0)"/><path d="M-3.2,-12 L3.2,-12 L4.2,-6.5 L-4.2,-6.5 Z" transform="rotate(60)"/><path d="M-3.2,-12 L3.2,-12 L4.2,-6.5 L-4.2,-6.5 Z" transform="rotate(120)"/><path d="M-3.2,-12 L3.2,-12 L4.2,-6.5 L-4.2,-6.5 Z" transform="rotate(180)"/><path d="M-3.2,-12 L3.2,-12 L4.2,-6.5 L-4.2,-6.5 Z" transform="rotate(240)"/><path d="M-3.2,-12 L3.2,-12 L4.2,-6.5 L-4.2,-6.5 Z" transform="rotate(300)"/><circle r="8.7"/><circle r="4" fill="#3c3f41"/></g></svg>
<svg style="left:2870.5px;top:105px;" width="31" height="30" viewBox="0 0 31 30"><defs><linearGradient id="sp1" x1="0" y1="0" x2="1" y2="1"><stop offset="0" stop-color="#f7f54a"/><stop offset="0.45" stop-color="#35d9a0"/><stop offset="1" stop-color="#1aa6e8"/></linearGradient></defs>
<path d="M2,2.5 C1,10 1.5,21 6,29 C15,26.5 25,21.5 30,14.5 C24,7 12,1.5 2,2.5 Z" fill="url(#sp1)"/>
<path d="M18,8 L30,14.5 C27,19 22,22.5 17,25 Z" fill="#1b6fd6" opacity="0.9"/><path d="M18,8 L30,14.5 L19,17 Z" fill="#15a0e8" opacity="0.9"/></svg>
<span style="left:90.3px;top:1273.8px;font-size:26.5px;line-height:34px;color:#bbbbbb;font-family:'Liberation Sans',sans-serif;-webkit-text-stroke:0.45px;letter-spacing:0.525px;">Debug:</span>
<svg style="left:219.5px;top:1275px;" width="32" height="33" viewBox="0 0 32 33"><rect x="5.7" y="2.2" width="21.8" height="17.5" fill="none" stroke="#8494a0" stroke-width="1.7"/>
<rect x="0.5" y="7" width="23.8" height="19.6" fill="#9aa7b0"/><rect x="3.1" y="11.6" width="18.6" height="12.4" fill="#3a8fb7"/>
<circle cx="26.7" cy="27.4" r="5.3" fill="#1a1d1e"/><circle cx="26.7" cy="27.4" r="4.1" fill="#0fdc1e"/></svg>
<span style="left:258.5px;top:1273.8px;font-size:26.5px;line-height:34px;color:#bbbbbb;font-family:'Liberation Sans',sans-serif;-webkit-text-stroke:0.45px;letter-spacing:0.537px;">RfrIssueApplication (1)</span>
<svg style="left:553.5px;top:1284px;" width="18" height="18" viewBox="0 0 18 18"><path d="M2,2 L15.5,15.5 M15.5,2 L2,15.5" stroke="#7c8084" stroke-width="1.8"/></svg>
<div style="left:194px;top:1312px;width:398px;height:5px;background:#747a80;"></div>
<svg style="left:2783.5px;top:1277px;" width="26" height="26" viewBox="0 0 24 24"><g transform="translate(12,12)" fill="#afb1b3"><path d="M-3.2,-12 L3.2,-12 L4.2,-6.5 L-4.2,-6.5 Z" transform="rotate(0)"/><path d="M-3.2,-12 L3.2,-12 L4.2,-6.5 L-4.2,-6.5 Z" transform="rotate(60)"/><path d="M-3.2,-12 L3.2,-12 L4.2,-6.5 L-4.2,-6.5 Z" transform="rotate(120)"/><path d="M-3.2,-12 L3.2,-12 L4.2,-6.5 L-4.2,-6.5 Z" transform="rotate(180)"/><path d="M-3.2,-12 L3.2,-12 L4.2,-6.5 L-4.2,-6.5 Z" transform="rotate(240)"/><path d="M-3.2,-12 L3.2,-12 L4.2,-6.5 L-4.2,-6.5 Z" transform="rotate(300)"/><circle r="8.7"/><circle r="4" fill="#3c3f41"/></g></svg>
<div style="left:2836px;top:1288px;width:24px;height:3.4px;background:#afb1b3;"></div>
<svg style="left:93px;top:1331px;" width="30" height="31" viewBox="0 0 30 31"><path d="M13,9.8 A9.3,9.3 0 1 0 16.5,28" fill="none" stroke="#499c54" stroke-width="3.8"/>
<path d="M11.5,1 L28,9.5 L14,18.5 Z" fill="#499c54"/><rect x="16.2" y="19.2" width="10" height="10" fill="#afb1b3"/></svg>
<span style="left:162.8px;top:1332.7px;font-size:22.5px;line-height:29px;color:#bbbbbb;font-family:'Liberation Sans',sans-serif;-webkit-text-stroke:0.45px;letter-spacing:0.022px;">Debugger</span>
<span style="left:314.6px;top:1332.7px;font-size:22.5px;line-height:29px;color:#bbbbbb;font-family:'Liberation Sans',sans-serif;-webkit-text-stroke:0.45px;letter-spacing:-0.165px;">Console</span>
<div style="left:136px;top:1369px;width:154px;height:5px;background:#747a80;"></div>
<svg style="left:436px;top:1332px;" width="25" height="25" viewBox="0 0 25 25"><path d="M0,4.2 H24.2 M0,13.2 H24.2 M0,22.2 H24.2" stroke="#5c5e60" stroke-width="4.3"/></svg>
<div style="left:480px;top:1324px;width:2px;height:40px;background:#515456;"></div>
<svg style="left:500px;top:1330px;" width="27" height="27" viewBox="0 0 27 27"><path d="M2.2,14.5 L12.3,4.2 L19.5,11.5" fill="none" stroke="#5c5e60" stroke-width="3.6"/><path d="M26.2,6 L26.2,17.8 L14.2,17.8 Z" fill="#5c5e60"/><rect x="2.5" y="22" width="23.8" height="4.1" fill="#5c5e60"/></svg>
<svg style="left:553.5px;top:1329px;" width="25" height="28" viewBox="0 0 25 28"><rect x="10.3" y="1" width="4.4" height="12" fill="#5c5e60"/><path d="M3.3,11.3 L21.7,11.3 L12.5,20.5 Z" fill="#5c5e60"/><rect x="0.5" y="23" width="24" height="4.1" fill="#5c5e60"/></svg>
<svg style="left:605.5px;top:1329px;" width="25" height="28" viewBox="0 0 25 28"><rect x="10.3" y="1" width="4.4" height="12" fill="#5c5e60"/><path d="M3.3,11.3 L21.7,11.3 L12.5,20.5 Z" fill="#5c5e60"/><rect x="0.5" y="23" width="24" height="4.1" fill="#5c5e60"/></svg>
<svg style="left:657.5px;top:1329px;" width="25" height="28" viewBox="0 0 25 28"><rect x="10.3" y="10" width="4.4" height="10.5" fill="#5c5e60"/><path d="M3.3,11 L21.7,11 L12.5,1.8 Z" fill="#5c5e60"/><rect x="0.5" y="23" width="24" height="4.1" fill="#5c5e60"/></svg>
<svg style="left:708px;top:1330px;" width="27" height="27" viewBox="0 0 27 27"><path d="M2,2.5 L13.5,14 M13.5,2.5 L2,14" stroke="#5c5e60" stroke-width="3.8"/><path d="M16.5,9.8 H24 V23.8 H10.6 V17.5" fill="none" stroke="#5c5e60" stroke-width="3.8"/><path d="M4.8,18.2 L16.4,18.2 L10.6,12 Z" fill="#5c5e60"/></svg>
<svg style="left:760.5px;top:1330px;" width="29" height="29" viewBox="0 0 29 29"><path d="M2.2,2.8 L12,12.6" stroke="#5c5e60" stroke-width="4"/><path d="M15.8,4.5 L15.8,16 L4.3,16 Z" fill="#5c5e60"/><path d="M17.6,13 H27.4 M22.5,13 V27 M17.6,27 H27.4" stroke="#5c5e60" stroke-width="2" fill="none"/></svg>
<div style="left:806px;top:1324px;width:2px;height:40px;background:#515456;"></div>
<svg style="left:827.5px;top:1331px;" width="25" height="25" viewBox="0 0 25 25"><rect x="2" y="2.8" width="20.5" height="20" fill="none" stroke="#5c5e60" stroke-width="4"/><path d="M2,10.2 H23 M2,16.6 H23 M9.2,10 V23 M15.4,10 V23" stroke="#5c5e60" stroke-width="2.6"/></svg>
<svg style="left:879.5px;top:1333px;" width="26" height="23" viewBox="0 0 26 23"><path d="M0.5,3 H9.5 M14.5,3 H24.5 M0.5,11.5 H24.5 M0.5,20 H9.5 M14.5,20 H24.5" stroke="#5c5e60" stroke-width="4" fill="none"/><path d="M8,20 C12,20 12.5,3 16.5,3" stroke="#5c5e60" stroke-width="2.4" fill="none"/></svg>
<svg style="left:2837px;top:1333px;" width="36" height="32" viewBox="0 0 36 32"><g fill="#afb1b3"><rect x="1" y="1" width="13.7" height="9.7"/><rect x="17" y="1" width="8" height="9.7"/><rect x="1" y="13" width="24" height="8"/><path d="M23,25 L35,25 L29,31.2 Z"/></g></svg>
<svg style="left:92px;top:1384px;" width="30" height="29" viewBox="0 0 30 29"><path d="M27.6,6.4 L22.4,11.6 L17.6,10.4 L16.4,5.6 L21.6,0.4 C17.2,-0.6 12.4,2.4 12.6,8.2 L13,11.4 L1,23.4 C-0.6,25.4 3.2,29.4 5.4,27.6 L17.2,15.6 L20,16 C25.6,16.2 28.8,11.2 27.6,6.4 Z" fill="#afb1b3"/></svg>
<div style="left:86px;top:1430px;width:40px;height:2px;background:#515456;"></div>
<svg style="left:94.5px;top:1451px;" width="27" height="24" viewBox="0 0 27 24"><rect x="0.5" y="1" width="5.5" height="22" fill="#5c5e60"/><path d="M9.5,1 L26,12 L9.5,23 Z" fill="#5c5e60"/></svg>
<div style="left:97.5px;top:1504.5px;width:6px;height:21.5px;background:#afb1b3;"></div>
<div style="left:108px;top:1504.5px;width:6px;height:21.5px;background:#afb1b3;"></div>
<svg style="left:99px;top:1571px;" width="16" height="12" viewBox="0 0 16 12"><path d="M1.5,1.5 L6,6 L1.5,10.5 M8.5,1.5 L13,6 L8.5,10.5" fill="none" stroke="#afb1b3" stroke-width="1.8"/></svg>
<svg style="left:697.5px;top:1575px;" width="16" height="12" viewBox="0 0 16 12"><path d="M1.5,1.5 L6,6 L1.5,10.5 M8.5,1.5 L13,6 L8.5,10.5" fill="none" stroke="#afb1b3" stroke-width="1.8"/></svg>
<span style="left:162.8px;top:1388.3px;font-size:22.5px;line-height:29px;color:#bbbbbb;font-family:'Liberation Sans',sans-serif;-webkit-text-stroke:0.45px;letter-spacing:-0.509px;">Frames</span>
<span style="left:706.7px;top:1388.3px;font-size:22.5px;line-height:29px;color:#bbbbbb;font-family:'Liberation Sans',sans-serif;-webkit-text-stroke:0.45px;letter-spacing:-0.126px;">Variables</span>
<svg style="left:585.5px;top:1445px;" width="26" height="26" viewBox="0 0 26 26"><path d="M0.5,0.5 L25.5,0.5 L16,11.5 L16,25.5 L10,25.5 L10,11.5 Z" fill="#afb1b3"/></svg>
<svg style="left:639px;top:1453.5px;" width="20" height="11" viewBox="0 0 20 11"><path d="M0.5,0.5 L19.5,0.5 L10,10.5 Z" fill="#afb1b3"/></svg>
<svg style="left:693.5px;top:1446px;" width="21" height="21" viewBox="0 0 21 21"><path d="M10.5,0.5 V20.5 M0.5,10.5 H20.5" stroke="#afb1b3" stroke-width="3.4"/></svg>
<div style="left:694px;top:1506px;width:20px;height:3.6px;background:#5c5e60;"></div>
<span style="left:254.6px;top:1499.5px;font-size:26.5px;line-height:34px;color:#787878;font-family:'Liberation Sans',sans-serif;-webkit-text-stroke:0.45px;letter-spacing:0.423px;">Frames are not available</span>
<span style="left:152.8px;top:1559.5px;font-size:22.5px;line-height:29px;color:#787878;font-family:'Liberation Sans',sans-serif;-webkit-text-stroke:0.45px;letter-spacing:0.035px;">Switch frames from anywhere in the IDE with ...</span>
<svg style="left:646px;top:1567px;" width="16" height="16" viewBox="0 0 16 16"><path d="M1.5,1.5 L14.5,14.5 M14.5,1.5 L1.5,14.5" stroke="#6e7174" stroke-width="1.8"/></svg>
<span style="left:745.5px;top:1436px;font-family:'DejaVu Sans Mono','Liberation Mono',monospace;font-size:26.58px;line-height:44px;color:#787878;-webkit-text-stroke:0.4px;">Evaluate expression (⏎) or add a watch (⇧⌘⏎)</span>
<svg style="left:2777.5px;top:1450px;" width="34" height="18" viewBox="0 0 34 18"><circle cx="8.5" cy="9.5" r="6.6" fill="none" stroke="#5c5e60" stroke-width="3"/><circle cx="25.5" cy="9.5" r="6.6" fill="none" stroke="#5c5e60" stroke-width="3"/><path d="M1,6 H33" stroke="#5c5e60" stroke-width="3"/></svg>
<svg style="left:2835.5px;top:1453.5px;" width="20" height="11" viewBox="0 0 20 11"><path d="M0.5,0.5 L19.5,0.5 L10,10.5 Z" fill="#afb1b3"/></svg>
<svg style="left:781.5px;top:1496px;" width="25" height="25" viewBox="0 0 25 25"><circle cx="12.5" cy="12.5" r="12" fill="#3592c4"/><rect x="10.6" y="10.2" width="3.8" height="9.5" fill="#223340"/><rect x="10.6" y="4.8" width="3.8" height="3.8" fill="#223340"/></svg>
<span style="left:817.0px;top:1491.7px;font-size:26.5px;line-height:34px;color:#bbbbbb;font-family:'Liberation Sans',sans-serif;-webkit-text-stroke:0.45px;letter-spacing:0.639px;">The application is running</span>
<span style="left:55.8px;top:237px;font-size:22.5px;line-height:29px;height:29px;color:#bbbbbb;letter-spacing:0.139px;-webkit-text-stroke:0.45px;transform-origin:0 0;transform:rotate(-90deg) translate(0,-14.0px);">Project</span>
<svg style="left:46px;top:250px;" width="23" height="19" viewBox="0 0 23 19"><path d="M0.5,0.5 L8.5,0.5 L11.5,5 L22.5,5 L22.5,18.5 L0.5,18.5 Z" fill="#afb1b3"/></svg>
<span style="left:55.8px;top:452.7px;font-size:22.5px;line-height:29px;height:29px;color:#bbbbbb;letter-spacing:-0.240px;-webkit-text-stroke:0.45px;transform-origin:0 0;transform:rotate(-90deg) translate(0,-14.0px);">Pull Requests</span>
<svg style="left:47px;top:464px;" width="22" height="23" viewBox="0 0 22 23"><g fill="#afb1b3"><rect x="0.5" y="0.5" width="4.2" height="22"/><path d="M6,9.5 L14.5,1.5 L14.5,7.5 L21.5,7.5 L21.5,22.5 L17.3,22.5 L17.3,11.5 L14.5,11.5 L14.5,17.5 Z"/></g></svg>
<span style="left:55.2px;top:1349px;font-size:22.5px;line-height:29px;height:29px;color:#bbbbbb;letter-spacing:0.190px;-webkit-text-stroke:0.45px;transform-origin:0 0;transform:rotate(-90deg) translate(0,-14.0px);">Structure</span>
<svg style="left:47.5px;top:1361.5px;" width="20" height="20" viewBox="0 0 20 20"><g fill="#afb1b3"><rect x="9.5" y="0.5" width="8" height="8"/><rect x="0.5" y="11" width="8" height="8"/><rect x="11" y="11" width="8" height="8"/></g></svg>
<span style="left:55.2px;top:1535.7px;font-size:22.5px;line-height:29px;height:29px;color:#bbbbbb;letter-spacing:-0.204px;-webkit-text-stroke:0.45px;transform-origin:0 0;transform:rotate(-90deg) translate(0,-14.0px);">Bookmarks</span>
<svg style="left:48px;top:1547.5px;" width="19" height="23" viewBox="0 0 19 23"><path d="M0.5,0.5 L18,0.5 L18,22 L9.25,14.5 L0.5,22 Z" fill="#afb1b3"/></svg>
<svg style="left:97px;top:1605px;" width="21" height="28" viewBox="0 0 21 28"><g fill="none" stroke="#afb1b3" stroke-width="3"><path d="M4.8,6 V23"/><path d="M15,9.8 V11.5 C15,17.5 4.8,14.5 4.8,20.5"/></g><g fill="#afb1b3"><circle cx="4.8" cy="6" r="3.6"/><circle cx="4.8" cy="23" r="3.6"/><circle cx="15" cy="9.8" r="3.6"/></g></svg>
<span style="left:128.6px;top:1603.7px;font-size:22.5px;line-height:29px;color:#bbbbbb;font-family:'Liberation Sans',sans-serif;-webkit-text-stroke:0.45px;letter-spacing:-0.384px;">Git</span>
<svg style="left:200px;top:1609px;" width="21" height="19" viewBox="0 0 21 19"><g fill="#afb1b3"><rect x="0" y="0.5" width="4" height="4"/><rect x="6" y="0.5" width="14.5" height="4"/><rect x="0" y="7.5" width="4" height="4"/><rect x="6" y="7.5" width="14.5" height="4"/><rect x="0" y="14.5" width="4" height="4"/><rect x="6" y="14.5" width="14.5" height="4"/></g></svg>
<span style="left:231.0px;top:1603.7px;font-size:22.5px;line-height:29px;color:#bbbbbb;font-family:'Liberation Sans',sans-serif;-webkit-text-stroke:0.45px;letter-spacing:-1.147px;">TODO</span>
<svg style="left:334.5px;top:1607.5px;" width="22" height="22" viewBox="0 0 22 22"><circle cx="11" cy="11" r="10.5" fill="#afb1b3"/><rect x="9.2" y="4.5" width="3.6" height="8.5" fill="#3c3f41"/><rect x="9.2" y="14.6" width="3.6" height="3.6" fill="#3c3f41"/></svg>
<span style="left:366.7px;top:1603.7px;font-size:22.5px;line-height:29px;color:#bbbbbb;font-family:'Liberation Sans',sans-serif;-webkit-text-stroke:0.45px;letter-spacing:-0.092px;">Problems</span>
<svg style="left:506px;top:1605.5px;" width="26" height="26" viewBox="0 0 32 33"><path d="M7.2,1.4 L13.8,6.6 L20.5,1.4" fill="none" stroke="#afb1b3" stroke-width="3.2"/>
<g fill="#afb1b3"><rect x="5.9" y="4.9" width="17.5" height="22.8" rx="8.7" ry="9"/>
<rect x="2" y="9" width="23.9" height="2.9"/><rect x="2" y="15.6" width="23.9" height="2.9"/><rect x="2" y="22" width="23.9" height="2.9"/></g>
<circle cx="25.9" cy="26.1" r="5.4" fill="#2a2d2e"/><circle cx="25.9" cy="26.1" r="4.1" fill="#0fdc1e"/></svg>
<span style="left:538.7px;top:1603.7px;font-size:22.5px;line-height:29px;color:#ffffff;font-family:'Liberation Sans',sans-serif;-webkit-text-stroke:0.45px;letter-spacing:-0.061px;">Debug</span>
<svg style="left:647.5px;top:1608px;" width="23" height="21" viewBox="0 0 23 21"><rect x="0" y="0" width="23" height="21" fill="#afb1b3"/><path d="M4,5 L9,9.5 L4,14 M11,15 H18" fill="none" stroke="#3c3f41" stroke-width="2.2"/></svg>
<span style="left:681.0px;top:1603.7px;font-size:22.5px;line-height:29px;color:#bbbbbb;font-family:'Liberation Sans',sans-serif;-webkit-text-stroke:0.45px;letter-spacing:-0.153px;">Terminal</span>
<svg style="left:805.5px;top:1606.8px;" width="28" height="26" viewBox="0 0 32 30"><path fill="#afb1b3" d="M0.9,11.3 L12.3,0.4 L18.8,0.4 L18.4,2.2 L13,6.3 L30.6,24 L26.3,28.4 L8.8,10.7 L4.9,15.5 Z"/></svg>
<span style="left:841.0px;top:1603.7px;font-size:22.5px;line-height:29px;color:#bbbbbb;font-family:'Liberation Sans',sans-serif;-webkit-text-stroke:0.45px;letter-spacing:-0.206px;">Build</span>
<svg style="left:932px;top:1605.8px;" width="25" height="25" viewBox="0 0 25 25"><path d="M12.5,0.5 L24.5,7.5 L12.5,14.5 L0.5,7.5 Z" fill="#afb1b3"/><path d="M2.5,12 L12.5,18 L22.5,12 M2.5,17 L12.5,23 L22.5,17" fill="none" stroke="#afb1b3" stroke-width="2.6"/></svg>
<span style="left:966.7px;top:1603.7px;font-size:22.5px;line-height:29px;color:#bbbbbb;font-family:'Liberation Sans',sans-serif;-webkit-text-stroke:0.45px;letter-spacing:0.012px;">Dependencies</span>
<svg style="left:2720px;top:1606px;" width="27" height="27" viewBox="0 0 27 27"><path d="M13,0.5 A12.8,12.8 0 1 0 13,26 L26.5,26 L26.5,13 A13,13 0 0 0 13,0.5 Z" fill="#499c54"/></svg>
<span style="left:2728.5px;top:1607.4px;font-size:19px;line-height:25px;color:#ffffff;font-family:'Liberation Sans',sans-serif;font-weight:700;">1</span>
<span style="left:2754.8px;top:1603.7px;font-size:22.5px;line-height:29px;color:#bbbbbb;font-family:'Liberation Sans',sans-serif;-webkit-text-stroke:0.45px;letter-spacing:-0.259px;">Event Log</span>
<svg style="left:47px;top:1648px;" width="26" height="24" viewBox="0 0 26 24"><path d="M1,5.5 V23 H20" fill="none" stroke="#afb1b3" stroke-width="2"/><rect x="5.5" y="1" width="19.5" height="18" fill="none" stroke="#afb1b3" stroke-width="2"/></svg>
<span style="left:98.4px;top:1645.7px;font-size:22.5px;line-height:29px;color:#bbbbbb;font-family:'Liberation Sans',sans-serif;-webkit-text-stroke:0.45px;letter-spacing:0.189px;">Build completed successfully in 3 sec, 689 ms (2 minutes ago)</span>
<span style="left:2424.4px;top:1645.7px;font-size:22.5px;line-height:29px;color:#bbbbbb;font-family:'Liberation Sans',sans-serif;-webkit-text-stroke:0.45px;letter-spacing:-1.048px;">15:1</span>
<span style="left:2488.4px;top:1645.7px;font-size:22.5px;line-height:29px;color:#bbbbbb;font-family:'Liberation Sans',sans-serif;-webkit-text-stroke:0.45px;letter-spacing:-1.329px;">LF</span>
<span style="left:2536.5px;top:1645.7px;font-size:22.5px;line-height:29px;color:#bbbbbb;font-family:'Liberation Sans',sans-serif;-webkit-text-stroke:0.45px;letter-spacing:0.251px;">UTF-8</span>
<span style="left:2626.5px;top:1645.7px;font-size:22.5px;line-height:29px;color:#bbbbbb;font-family:'Liberation Sans',sans-serif;-webkit-text-stroke:0.45px;letter-spacing:0.181px;">4 spaces</span>
<svg style="left:2745px;top:1645.5px;" width="21" height="29" viewBox="0 0 21 29"><g fill="none" stroke="#afb1b3" stroke-width="3"><path d="M4.8,4 V24.5"/><path d="M15.7,7.4 V10 C15.7,16.5 4.8,13.5 4.8,20.5"/></g><g fill="#afb1b3"><circle cx="4.8" cy="3.9" r="3.6"/><circle cx="4.8" cy="24.6" r="3.6"/><circle cx="15.7" cy="7.4" r="3.6"/></g></svg>
<span style="left:2776.6px;top:1645.7px;font-size:22.5px;line-height:29px;color:#bbbbbb;font-family:'Liberation Sans',sans-serif;-webkit-text-stroke:0.45px;letter-spacing:0.073px;">master</span>
<svg style="left:2866px;top:1647px;" width="24" height="24" viewBox="0 0 24 24"><path d="M2.5,11 V6.5 A4.2,4.2 0 0 1 11,6.5 V11" fill="none" stroke="#afb1b3" stroke-width="2.6"/><rect x="8" y="10.5" width="14.5" height="12" fill="#afb1b3"/></svg>
</div></div>
</body></html>
